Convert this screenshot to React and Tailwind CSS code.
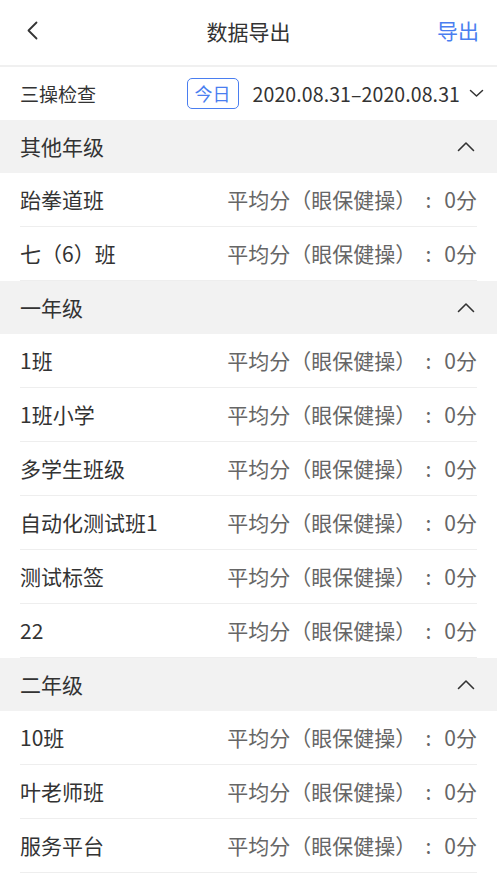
import React from "react";

const font = { fontFamily: '"Noto Sans CJK SC", "Noto Sans", sans-serif' };

const sections = [
  { title: "其他年级", rows: ["跆拳道班", "七（6）班"] },
  { title: "一年级", rows: ["1班", "1班小学", "多学生班级", "自动化测试班1", "测试标签", "22"] },
  { title: "二年级", rows: ["10班", "叶老师班", "服务平台"] },
];

function UpChevron() {
  return (
    <svg width="18" height="11" viewBox="0 0 18 11" fill="none">
      <polyline points="1.5,9.5 9,2 16.5,9.5" stroke="#333" strokeWidth="1.6" strokeLinecap="round" strokeLinejoin="round" />
    </svg>
  );
}

export default function App() {
  return (
    <div className="w-[497px] min-h-[883px] bg-white text-[#333] [text-spacing-trim:space-all]" style={font}>
      <div className="relative h-[67px] flex items-center justify-center border-b-2 border-[#f0f0f0]">
        <div className="absolute left-[26px] top-[21px]">
          <svg width="13" height="19" viewBox="0 0 13 19" fill="none">
            <polyline points="10.5,1.5 2.5,9.5 10.5,17.5" stroke="#333" strokeWidth="1.8" strokeLinecap="round" strokeLinejoin="round" />
          </svg>
        </div>
        <span className="text-[21px] leading-none -mt-[2px]">数据导出</span>
        <span className="absolute right-[18px] top-[20px] text-[21px] leading-none text-[#4a7ef0]">导出</span>
      </div>
      <div className="h-[53px] pl-5 pr-[13px] flex items-center justify-between">
        <span className="text-[19px] leading-none">三操检查</span>
        <div className="flex items-center">
          <span className="border border-[#4a7ef0] text-[#4a7ef0] rounded-[5px] text-[18px] leading-[29px] px-[7px]">今日</span>
          <span className="ml-[14px] text-[19.5px] leading-none tracking-[0.1px]">2020.08.31–2020.08.31</span>
          <svg className="ml-[9px]" width="15" height="9" viewBox="0 0 15 9" fill="none">
            <polyline points="1.5,1.5 7.5,7 13.5,1.5" stroke="#333" strokeWidth="1.5" strokeLinecap="round" strokeLinejoin="round" />
          </svg>
        </div>
      </div>
      {sections.map((s) => (
        <div key={s.title}>
          <div className="h-[53px] bg-[#f2f2f2] px-5 flex items-center justify-between">
            <span className="text-[21px] leading-none">{s.title}</span>
            <span className="mr-[2px]"><UpChevron /></span>
          </div>
          <div className="px-5">
            {s.rows.map((r) => (
              <div key={r} className="h-[54px] border-b border-[#eeeeee] flex items-center justify-between">
                <span className="text-[21px] leading-none">{r}</span>
                <span className="text-[21px] leading-none text-[#666] flex items-center">
                  <span>平均分（眼保健操）</span>
                  <span className="inline-block w-[24px] text-center">:</span>
                  <span className="ml-[4px]">0分</span>
                </span>
              </div>
            ))}
          </div>
        </div>
      ))}
    </div>
  );
}
